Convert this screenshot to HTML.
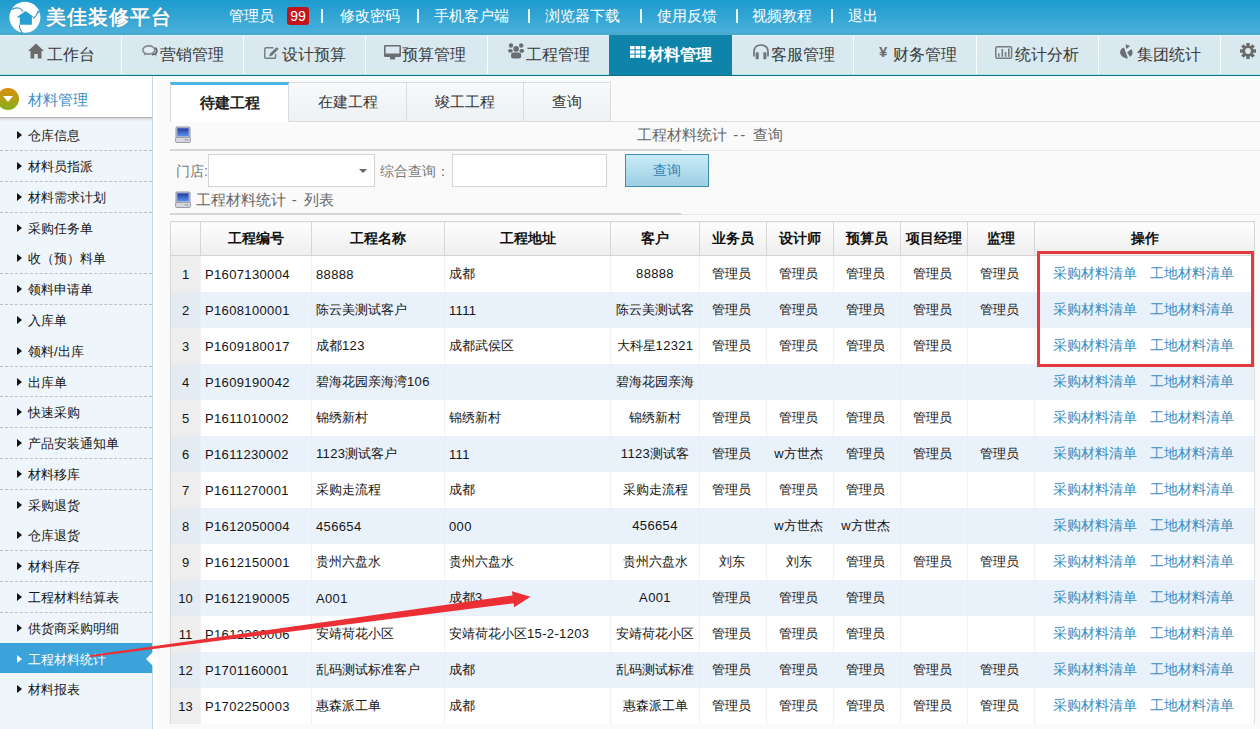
<!DOCTYPE html>
<html><head><meta charset="utf-8">
<style>
*{margin:0;padding:0;box-sizing:border-box}
html,body{width:1260px;height:729px;overflow:hidden;background:#fff;font-family:"Liberation Sans",sans-serif;color:#333}
.abs{position:absolute}
#top{left:0;top:0;width:1260px;height:35px;background:linear-gradient(#1d9bce,#47aed9 90%,#4aa6c8)}
#brand{left:46px;top:4px;font-size:20px;line-height:26px;font-weight:bold;color:#fff;letter-spacing:1px;text-shadow:0 0 1px rgba(0,60,100,.5)}
.tl{top:6px;font-size:15px;line-height:20px;color:#fff;white-space:nowrap}
.sep{top:9px;width:2px;height:14px;background:#e6f4fb}
#badge{left:287px;top:6.5px;width:22px;height:18px;background:#c3141b;border-radius:3px;color:#fff;font-size:14px;line-height:18px;text-align:center}
#nav{left:0;top:35px;width:1260px;height:40px;background:linear-gradient(#dbe9ef,#d7e9ef 80%,#d9ebe6);border-top:1px solid #dcf9fd}
#navb{left:0;top:74px;width:1260px;height:2px;background:linear-gradient(#a9e9f5 50%,#16717f 50%)}
.ni{top:8px;font-size:16.4px;line-height:22px;color:#3a3a3a;white-space:nowrap}
.nsep{top:36px;width:1px;height:38px;background:#f7fcfe}
#side{left:0;top:76px;width:153px;height:653px;background:#eef6fc;border-right:1px solid #c6d6e2}
#shead{left:0;top:0;width:152px;height:41px;background:#fff}
#shsh{left:0;top:41px;width:152px;height:4px;background:linear-gradient(#b4b4b4 25%,#d2d5d8 25%,#eef6fc)}
.si{left:28px;font-size:13px;line-height:20px;color:#151515;white-space:nowrap}
.tri{left:17px;width:0;height:0;border-top:4px solid transparent;border-bottom:4px solid transparent;border-left:5px solid #111}
.dash{left:0;width:152px;height:0;border-top:1px dashed #b9c2c8}
.tab{top:82px;height:40px;background:linear-gradient(#f7f9fa,#edf1f4);border:1px solid #d6dcdf;border-left:none;font-size:15px;line-height:38px;text-align:center;color:#333}
.hd{font-size:15px;line-height:20px;color:#666;white-space:nowrap}
.inp{background:#fff;border:1px solid #d3d3d3}
table{position:absolute;left:170px;top:221px;border-collapse:collapse;table-layout:fixed;font-size:13px;color:#151515}
th{height:34px;font-size:14px;font-weight:bold;color:#111;background:linear-gradient(#fdfdfd,#eeeeee);border:1px solid #d6d6d6;white-space:nowrap;overflow:hidden}
td{height:36px;background:#fff;border-left:1px solid #f0f0f0;white-space:nowrap;overflow:hidden;text-align:center;padding:1px 4px 0 1px}
td.n{background:#eeeeee;border-left:1px solid #d6d6d6;text-align:center;padding:1px 0 0 0}
td.l{text-align:left;padding-left:4px}
tr.alt td{background:#e9f1fb;border-left-color:#e6eef8}
tr.alt td.n{background:#e4ebf3;border-left-color:#d6d6d6}
td.ops{font-size:14px;color:#3a8dc0;text-align:left;padding-left:18px;border-right:1px solid #e0e0e0}
.ops span{margin-right:13px}
td i{font-style:normal;letter-spacing:0.35px}
</style></head>
<body>

<div id="top" class="abs">
<svg class="abs" style="left:6px;top:0" width="38" height="36" viewBox="0 0 38 36">
<circle cx="18.9" cy="17.3" r="15.5" fill="#fff"/>
<path d="M10.4 17.6 L19.5 11 L27.2 16.5 L25.9 17.2 L25.9 24.7 L13.8 24.7 L13.8 17.6 Z" fill="#2a9fd3"/>
<path d="M5.2 9.6 Q9.5 7.2 12.8 8.1 Q15.5 9 17 11.8" stroke="#4a93b8" stroke-width="1.1" fill="none"/>
<path d="M26.9 18.3 Q30.5 16.5 31.6 12.3" stroke="#4a93b8" stroke-width="1.1" fill="none"/>
<path d="M13.3 24.7 Q13.5 30 16.8 33.2" stroke="#4a93b8" stroke-width="1.1" fill="none"/>
<path d="M3 9.5 L5.8 9.3 L4.2 12 Z M31 10.5 L33.5 11.5 L32.5 14 Z M15.5 33 L17.5 35.5 L14 34.5Z" fill="#2a9fd3"/>
</svg>
<div id="brand" class="abs">美佳装修平台</div>
<div class="abs tl" style="left:229px">管理员</div>
<div id="badge" class="abs">99</div>
<div class="abs sep" style="left:321px"></div>
<div class="abs tl" style="left:340px">修改密码</div>
<div class="abs sep" style="left:417px"></div>
<div class="abs tl" style="left:434px">手机客户端</div>
<div class="abs sep" style="left:528px"></div>
<div class="abs tl" style="left:545px">浏览器下载</div>
<div class="abs sep" style="left:640px"></div>
<div class="abs tl" style="left:657px">使用反馈</div>
<div class="abs sep" style="left:736px"></div>
<div class="abs tl" style="left:752px">视频教程</div>
<div class="abs sep" style="left:831px"></div>
<div class="abs tl" style="left:848px">退出</div>
</div>
<div id="nav" class="abs"></div>
<div id="navb" class="abs"></div>
<div class="abs" style="left:609px;top:35px;width:123px;height:40px;background:#0f84aa"></div>
<div class="abs nsep" style="left:121px"></div>
<div class="abs nsep" style="left:243px"></div>
<div class="abs nsep" style="left:365px"></div>
<div class="abs nsep" style="left:487px"></div>
<div class="abs nsep" style="left:853px"></div>
<div class="abs nsep" style="left:976px"></div>
<div class="abs nsep" style="left:1098px"></div>
<div class="abs nsep" style="left:1220px"></div>
<svg class="abs" style="left:28px;top:43px" width="16" height="16" viewBox="0 0 16 16"><path d="M8 0.5 L16 8 L13.5 8 L13.5 15.5 L9.7 15.5 L9.7 11 L6.3 11 L6.3 15.5 L2.5 15.5 L2.5 8 L0 8 Z" fill="#6b6b6b"/></svg>
<svg class="abs" style="left:142px;top:45px" width="16" height="13" viewBox="0 0 16 13"><path d="M10 9.5 Q14.5 9.5 14.8 6 Q15 4 13 2.8" stroke="#5f666b" stroke-width="1.8" fill="none"/><path d="M12.5 9 L15 12 L13.5 8" fill="#5f666b"/><ellipse cx="6.8" cy="5" rx="6" ry="4.1" fill="#e4eef2" stroke="#82898e" stroke-width="1.6"/><path d="M2.5 8 L1.8 10.6 L5.5 9" fill="#82898e"/></svg>
<svg class="abs" style="left:264px;top:47px" width="16" height="12" viewBox="0 0 16 12"><path d="M9.5 0.8 L2 0.8 Q0.8 0.8 0.8 2 L0.8 10.2 Q0.8 11.3 2 11.3 L10.5 11.3 Q11.6 11.3 11.6 10.2 L11.6 7" stroke="#7a7f83" stroke-width="1.5" fill="none"/><path d="M5.2 9.6 L6 6.6 L12.6 0.2 L14.8 1.8 L8.2 8.6 Z" fill="#6f7478"/></svg>
<svg class="abs" style="left:384px;top:44.5px" width="17" height="15" viewBox="0 0 17 15"><path fill-rule="evenodd" d="M1.2 0 L15.8 0 Q17 0 17 1.2 L17 10.8 Q17 12 15.8 12 L1.2 12 Q0 12 0 10.8 L0 1.2 Q0 0 1.2 0 Z M1.6 1.6 L1.6 8.6 L15.4 8.6 L15.4 1.6 Z" fill="#6a6e72"/><rect x="6" y="11.8" width="5.2" height="2.6" fill="#6a6e72"/></svg>
<svg class="abs" style="left:508px;top:43px" width="16" height="16" viewBox="0 0 16 16"><g fill="#6a6e72"><circle cx="3" cy="2.5" r="2.2"/><circle cx="13.2" cy="2.5" r="2.2"/><circle cx="8.1" cy="5.9" r="2.8"/><ellipse cx="2.4" cy="7.8" rx="2.4" ry="1.9"/><ellipse cx="13.8" cy="7.8" rx="2.4" ry="1.9"/><rect x="3" y="9.6" width="10.2" height="5.8" rx="2.2"/></g></svg>
<svg class="abs" style="left:630px;top:46px" width="16" height="12" viewBox="0 0 16 12"><g fill="#fff"><rect x="0" y="0" width="4.6" height="3.3"/><rect x="5.6" y="0" width="4.6" height="3.3"/><rect x="11.2" y="0" width="4.6" height="3.3"/><rect x="0" y="4.3" width="4.6" height="3.3"/><rect x="5.6" y="4.3" width="4.6" height="3.3"/><rect x="11.2" y="4.3" width="4.6" height="3.3"/><rect x="0" y="8.6" width="4.6" height="3.3"/><rect x="5.6" y="8.6" width="4.6" height="3.3"/><rect x="11.2" y="8.6" width="4.6" height="3.3"/></g></svg>
<svg class="abs" style="left:753px;top:43.5px" width="16" height="16" viewBox="0 0 16 16"><path d="M1 12.5 L1 8 Q1 1 8 1 Q15 1 15 8 L15 12.5" stroke="#6e7478" stroke-width="1.7" fill="none"/><rect x="2.7" y="8.3" width="3" height="6.9" rx="0.6" fill="#6e7478"/><rect x="10.4" y="8.3" width="3" height="6.9" rx="0.6" fill="#6e7478"/></svg>
<svg class="abs" style="left:995px;top:45.5px" width="18" height="13" viewBox="0 0 18 13"><rect x="0.8" y="0.8" width="15.8" height="11.4" rx="1.5" fill="none" stroke="#777d80" stroke-width="1.5"/><g fill="#777d80"><rect x="3" y="7.5" width="1.6" height="3.3"/><rect x="6.5" y="3" width="1.6" height="7.8"/><rect x="9.8" y="6" width="1.6" height="4.8"/><rect x="13" y="2.5" width="1.6" height="8.3"/></g></svg>
<svg class="abs" style="left:1119px;top:44px" width="14" height="15" viewBox="0 0 14 15"><g fill="#6a6e72"><path d="M5 3.6 C-0.5 5, -1 13.5, 9 14.6 Z"/><path d="M6.6 0.2 L11.2 1.9 L7.2 5.1 Z"/><path d="M8.2 8.2 L12.6 5 Q13.8 7.5 13.3 10.4 L11 13 Z"/></g></svg>
<svg class="abs" style="left:1240px;top:43px" width="16" height="16" viewBox="0 0 16 16"><g fill="#6b6b6b"><circle cx="8" cy="8" r="5.5"/><rect x="6.3" y="0" width="3.4" height="16"/><rect x="0" y="6.3" width="16" height="3.4"/><rect x="6.3" y="0" width="3.4" height="16" transform="rotate(45 8 8)"/><rect x="6.3" y="0" width="3.4" height="16" transform="rotate(-45 8 8)"/></g><circle cx="8" cy="8" r="2.9" fill="#dceaef"/></svg>
<div class="abs ni" style="left:879px;top:43px;font-size:15px;line-height:18px;color:#6b6b6b;font-weight:bold">¥</div>
<div class="abs ni" style="left:47px;top:43px">工作台</div>
<div class="abs ni" style="left:160px;top:43px">营销管理</div>
<div class="abs ni" style="left:282px;top:43px">设计预算</div>
<div class="abs ni" style="left:402px;top:43px">预算管理</div>
<div class="abs ni" style="left:526px;top:43px">工程管理</div>
<div class="abs ni" style="left:771px;top:43px">客服管理</div>
<div class="abs ni" style="left:893px;top:43px">财务管理</div>
<div class="abs ni" style="left:1015px;top:43px">统计分析</div>
<div class="abs ni" style="left:1137px;top:43px">集团统计</div>
<div class="abs ni" style="left:648px;top:43px;color:#fff;font-weight:bold">材料管理</div>
<div id="side" class="abs">
<div id="shead" class="abs">
<div class="abs" style="left:-3px;top:11.5px;width:22px;height:22px;border-radius:50%;background:linear-gradient(#dc8d0c,#84b01f)"></div>
<div class="abs" style="left:3px;top:19.5px;width:0;height:0;border-left:5px solid transparent;border-right:5px solid transparent;border-top:6px solid #fff"></div>
<div class="abs" style="left:28px;top:13.5px;font-size:15px;line-height:20px;color:#3d8fc6">材料管理</div>
</div>
<div id="shsh" class="abs"></div>
<div class="abs tri" style="top:55.30px"></div>
<div class="abs si" style="top:50.30px">仓库信息</div>
<div class="abs dash" style="top:74.20px"></div>
<div class="abs tri" style="top:86.08px"></div>
<div class="abs si" style="top:81.08px">材料员指派</div>
<div class="abs dash" style="top:104.98px"></div>
<div class="abs tri" style="top:116.86px"></div>
<div class="abs si" style="top:111.86px">材料需求计划</div>
<div class="abs dash" style="top:135.76px"></div>
<div class="abs tri" style="top:147.64px"></div>
<div class="abs si" style="top:142.64px">采购任务单</div>
<div class="abs tri" style="top:178.42px"></div>
<div class="abs si" style="top:173.42px">收（预）料单</div>
<div class="abs dash" style="top:197.32px"></div>
<div class="abs tri" style="top:209.20px"></div>
<div class="abs si" style="top:204.20px">领料申请单</div>
<div class="abs dash" style="top:228.10px"></div>
<div class="abs tri" style="top:239.98px"></div>
<div class="abs si" style="top:234.98px">入库单</div>
<div class="abs tri" style="top:270.76px"></div>
<div class="abs si" style="top:265.76px">领料/出库</div>
<div class="abs dash" style="top:289.66px"></div>
<div class="abs tri" style="top:301.54px"></div>
<div class="abs si" style="top:296.54px">出库单</div>
<div class="abs dash" style="top:320.44px"></div>
<div class="abs tri" style="top:332.32px"></div>
<div class="abs si" style="top:327.32px">快速采购</div>
<div class="abs dash" style="top:351.22px"></div>
<div class="abs tri" style="top:363.10px"></div>
<div class="abs si" style="top:358.10px">产品安装通知单</div>
<div class="abs dash" style="top:382.00px"></div>
<div class="abs tri" style="top:393.88px"></div>
<div class="abs si" style="top:388.88px">材料移库</div>
<div class="abs dash" style="top:412.78px"></div>
<div class="abs tri" style="top:424.66px"></div>
<div class="abs si" style="top:419.66px">采购退货</div>
<div class="abs tri" style="top:455.44px"></div>
<div class="abs si" style="top:450.44px">仓库退货</div>
<div class="abs dash" style="top:474.34px"></div>
<div class="abs tri" style="top:486.22px"></div>
<div class="abs si" style="top:481.22px">材料库存</div>
<div class="abs dash" style="top:505.12px"></div>
<div class="abs tri" style="top:517.00px"></div>
<div class="abs si" style="top:512.00px">工程材料结算表</div>
<div class="abs dash" style="top:535.90px"></div>
<div class="abs tri" style="top:547.78px"></div>
<div class="abs si" style="top:542.78px">供货商采购明细</div>
<div class="abs" style="left:0;top:567.26px;width:152px;height:30px;background:#3ba3d9"></div>
<div class="abs" style="left:146px;top:575.56px;width:0;height:0;border-top:7px solid transparent;border-bottom:7px solid transparent;border-right:7px solid #fff"></div>
<div class="abs tri" style="top:578.56px;border-left-color:#fff"></div>
<div class="abs si" style="top:573.56px;color:#fff">工程材料统计</div>
<div class="abs tri" style="top:609.34px"></div>
<div class="abs si" style="top:604.34px">材料报表</div>
</div>
<div class="abs" style="left:157px;top:76px;width:1103px;height:653px;background:#fafafa"></div>
<div class="abs" style="left:170px;top:121px;width:1090px;height:1px;background:#dcdfe1"></div>
<div class="abs tab" style="left:170px;width:119px;background:#fff;border-left:1px solid #d6dcdf;border-right:1px solid #d6dcdf;border-top:3px solid #4db3e0;border-bottom:none;line-height:36px;font-weight:bold;color:#222">待建工程</div>
<div class="abs tab" style="left:289px;width:118px">在建工程</div>
<div class="abs tab" style="left:407px;width:117px">竣工工程</div>
<div class="abs tab" style="left:524px;width:87px">查询</div>
<svg class="abs" style="left:175px;top:126px" width="16" height="17" viewBox="0 0 16 17"><defs><linearGradient id="sg" x1="0" y1="0" x2="0" y2="1"><stop offset="0" stop-color="#24399c"/><stop offset="1" stop-color="#5b8ff0"/></linearGradient></defs><rect x="0.5" y="0.5" width="15" height="11.5" rx="1.5" fill="#9097a0"/><rect x="1.6" y="1.6" width="12.8" height="9.2" fill="#c3d0f2"/><rect x="2.3" y="2.3" width="11.4" height="7.9" fill="url(#sg)"/><rect x="0.6" y="11.3" width="14.8" height="5.2" rx="1" fill="#d8d6e0" stroke="#8f959c" stroke-width="0.9"/><rect x="9.5" y="13.3" width="4" height="1.3" fill="#a7a6b2"/></svg>
<div class="abs hd" style="left:637px;top:125px">工程材料统计<span style="letter-spacing:2px"> -- </span>查询</div>
<div class="abs" style="left:170px;top:149px;width:511px;height:2px;background:#d5d5d5"></div>
<div class="abs" style="left:681px;top:150px;width:579px;height:1px;background:#e6e6e6"></div>
<div class="abs" style="left:176px;top:161px;font-size:14px;line-height:20px;color:#777">门店:</div>
<div class="abs inp" style="left:208px;top:154px;width:167px;height:33px"></div>
<div class="abs" style="left:359px;top:169px;width:0;height:0;border-left:4px solid transparent;border-right:4px solid transparent;border-top:4px solid #666"></div>
<div class="abs" style="left:380px;top:161px;font-size:14px;line-height:20px;color:#777">综合查询：</div>
<div class="abs inp" style="left:452px;top:154px;width:155px;height:33px"></div>
<div class="abs" style="left:625px;top:154px;width:84px;height:33px;background:linear-gradient(#c9ebf7,#9ccfe3);border:1px solid #3f8fb3;font-size:14px;line-height:31px;text-align:center;color:#2f80b4">查询</div>
<svg class="abs" style="left:175px;top:191px" width="16" height="17" viewBox="0 0 16 17"><defs><linearGradient id="sg" x1="0" y1="0" x2="0" y2="1"><stop offset="0" stop-color="#24399c"/><stop offset="1" stop-color="#5b8ff0"/></linearGradient></defs><rect x="0.5" y="0.5" width="15" height="11.5" rx="1.5" fill="#9097a0"/><rect x="1.6" y="1.6" width="12.8" height="9.2" fill="#c3d0f2"/><rect x="2.3" y="2.3" width="11.4" height="7.9" fill="url(#sg)"/><rect x="0.6" y="11.3" width="14.8" height="5.2" rx="1" fill="#d8d6e0" stroke="#8f959c" stroke-width="0.9"/><rect x="9.5" y="13.3" width="4" height="1.3" fill="#a7a6b2"/></svg>
<div class="abs hd" style="left:196px;top:190px">工程材料统计<span style="letter-spacing:1.5px"> - </span>列表</div>
<div class="abs" style="left:170px;top:213px;width:511px;height:2px;background:#d5d5d5"></div>
<div class="abs" style="left:681px;top:214px;width:579px;height:1px;background:#e6e6e6"></div>
<table style="width:1084px"><colgroup><col style="width:30px"><col style="width:111px"><col style="width:133px"><col style="width:166px"><col style="width:89px"><col style="width:67px"><col style="width:67px"><col style="width:67px"><col style="width:67px"><col style="width:67px"><col style="width:220px"></colgroup><tr><th></th><th>工程编号</th><th>工程名称</th><th>工程地址</th><th>客户</th><th>业务员</th><th>设计师</th><th>预算员</th><th>项目经理</th><th>监理</th><th>操作</th></tr><tr><td class="n">1</td><td class="l"><i>P1607130004</i></td><td class="l"><i>88888</i></td><td class="l">成都</td><td style="padding:0"><i>88888</i></td><td>管理员</td><td>管理员</td><td>管理员</td><td>管理员</td><td>管理员</td><td class="ops"><span>采购材料清单</span><span>工地材料清单</span></td></tr><tr class="alt"><td class="n">2</td><td class="l"><i>P1608100001</i></td><td class="l">陈云美测试客户</td><td class="l"><i>1111</i></td><td style="padding:0">陈云美测试客</td><td>管理员</td><td>管理员</td><td>管理员</td><td>管理员</td><td>管理员</td><td class="ops"><span>采购材料清单</span><span>工地材料清单</span></td></tr><tr><td class="n">3</td><td class="l"><i>P1609180017</i></td><td class="l">成都<i>123</i></td><td class="l">成都武侯区</td><td style="padding:0">大科星<i>12321</i></td><td>管理员</td><td>管理员</td><td>管理员</td><td>管理员</td><td></td><td class="ops"><span>采购材料清单</span><span>工地材料清单</span></td></tr><tr class="alt"><td class="n">4</td><td class="l"><i>P1609190042</i></td><td class="l">碧海花园亲海湾<i>106</i></td><td class="l"></td><td style="padding:0">碧海花园亲海</td><td></td><td></td><td></td><td></td><td></td><td class="ops"><span>采购材料清单</span><span>工地材料清单</span></td></tr><tr><td class="n">5</td><td class="l"><i>P1611010002</i></td><td class="l">锦绣新村</td><td class="l">锦绣新村</td><td style="padding:0">锦绣新村</td><td>管理员</td><td>管理员</td><td>管理员</td><td>管理员</td><td></td><td class="ops"><span>采购材料清单</span><span>工地材料清单</span></td></tr><tr class="alt"><td class="n">6</td><td class="l"><i>P1611230002</i></td><td class="l"><i>1123</i>测试客户</td><td class="l"><i>111</i></td><td style="padding:0"><i>1123</i>测试客</td><td>管理员</td><td><i>w</i>方世杰</td><td>管理员</td><td>管理员</td><td>管理员</td><td class="ops"><span>采购材料清单</span><span>工地材料清单</span></td></tr><tr><td class="n">7</td><td class="l"><i>P1611270001</i></td><td class="l">采购走流程</td><td class="l">成都</td><td style="padding:0">采购走流程</td><td>管理员</td><td>管理员</td><td>管理员</td><td></td><td></td><td class="ops"><span>采购材料清单</span><span>工地材料清单</span></td></tr><tr class="alt"><td class="n">8</td><td class="l"><i>P1612050004</i></td><td class="l"><i>456654</i></td><td class="l"><i>000</i></td><td style="padding:0"><i>456654</i></td><td></td><td><i>w</i>方世杰</td><td><i>w</i>方世杰</td><td></td><td></td><td class="ops"><span>采购材料清单</span><span>工地材料清单</span></td></tr><tr><td class="n">9</td><td class="l"><i>P1612150001</i></td><td class="l">贵州六盘水</td><td class="l">贵州六盘水</td><td style="padding:0">贵州六盘水</td><td>刘东</td><td>刘东</td><td>管理员</td><td>管理员</td><td>管理员</td><td class="ops"><span>采购材料清单</span><span>工地材料清单</span></td></tr><tr class="alt"><td class="n">10</td><td class="l"><i>P1612190005</i></td><td class="l"><i>A001</i></td><td class="l">成都<i>3</i></td><td style="padding:0"><i>A001</i></td><td>管理员</td><td>管理员</td><td>管理员</td><td></td><td></td><td class="ops"><span>采购材料清单</span><span>工地材料清单</span></td></tr><tr><td class="n">11</td><td class="l"><i>P1612200006</i></td><td class="l">安靖荷花小区</td><td class="l">安靖荷花小区<i>15-2-1203</i></td><td style="padding:0">安靖荷花小区</td><td>管理员</td><td>管理员</td><td>管理员</td><td></td><td></td><td class="ops"><span>采购材料清单</span><span>工地材料清单</span></td></tr><tr class="alt"><td class="n">12</td><td class="l"><i>P1701160001</i></td><td class="l">乱码测试标准客户</td><td class="l">成都</td><td style="padding:0">乱码测试标准</td><td>管理员</td><td>管理员</td><td>管理员</td><td>管理员</td><td>管理员</td><td class="ops"><span>采购材料清单</span><span>工地材料清单</span></td></tr><tr><td class="n">13</td><td class="l"><i>P1702250003</i></td><td class="l">惠森派工单</td><td class="l">成都</td><td style="padding:0">惠森派工单</td><td>管理员</td><td>管理员</td><td>管理员</td><td>管理员</td><td>管理员</td><td class="ops"><span>采购材料清单</span><span>工地材料清单</span></td></tr></table>
<div class="abs" style="left:1037px;top:251px;width:217px;height:116px;border:3px solid #e23a3f"></div>
<svg class="abs" style="left:0;top:0" width="1260" height="729" viewBox="0 0 1260 729"><path d="M89.5 655.2 L512.6 595.4 L511.9 591.2 L530.5 596.8 L514.2 607.3 L513.5 603.3 L90.3 657.0 Z" fill="#ec2f34"/></svg>
</body></html>
